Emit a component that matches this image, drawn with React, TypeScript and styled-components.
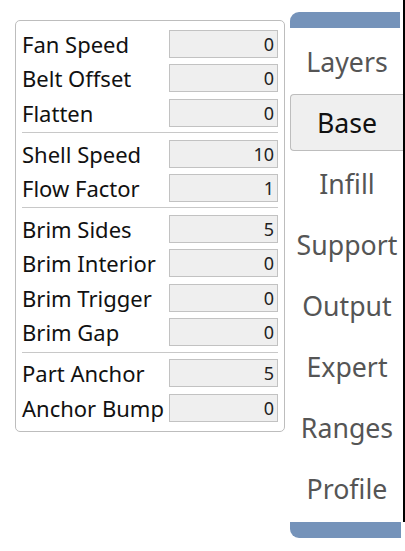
import styled, { createGlobalStyle } from 'styled-components'

const GlobalStyle = createGlobalStyle`
    html, body {
        margin: 0;
        padding: 0;
        background: #fff;
        font-family: 'Noto Sans', 'Open Sans', sans-serif;
        overflow: hidden;
    }
`

const Page = styled.div`
    display: flex;
    align-items: flex-start;
    width: 405px;
    height: 551px;
`

const Panel = styled.div`
    margin: 20px 0 0 15px;
    width: 270px;
    box-sizing: border-box;
    border: 1px solid #bdbdbd;
    border-radius: 5px;
    padding: 5.5px 6px 6px 6px;
    display: flex;
    flex-direction: column;
`

const Row = styled.div`
    height: 34.5px;
    display: flex;
    align-items: center;
    justify-content: space-between;
`

const Label = styled.span`
    font-size: 22px;
    color: #111;
    white-space: nowrap;
`

const Value = styled.input`
    width: 109px;
    height: 28px;
    box-sizing: border-box;
    border: 1px solid #c2c2c2;
    background: #efefef;
    padding: 0 3px 0 0;
    text-align: right;
    font-family: 'Noto Sans', sans-serif;
    font-size: 18px;
    color: #222;
    outline: none;
`

const Separator = styled.div`
    height: 1px;
    background: #c8c8c8;
    margin: 2px 0 3.3px 0;
`

const Menu = styled.div`
    margin-left: 5px;
    width: 115px;
    display: flex;
    flex-direction: column;
`

const MenuList = styled.div`
    display: flex;
    flex-direction: column;
    gap: 4px;
    padding-top: 12px;
    height: 522px;
    box-sizing: border-box;
    border-right: 2px solid #000;
`

const Bar = styled.div<{ $bottom?: boolean }>`
    width: ${({ $bottom }) => ($bottom ? '111px' : '110px')};
    height: 16px;
    flex-shrink: 0;
    background: #7593ba;
    border-radius: ${({ $bottom }) => ($bottom ? '0 0 0 9px' : '9px 0 0 0')};
    margin-bottom: ${({ $bottom }) => ($bottom ? '0' : '1px')};
`

const Item = styled.div<{ $active?: boolean }>`
    height: 57px;
    flex-shrink: 0;
    box-sizing: border-box;
    display: flex;
    align-items: center;
    justify-content: center;
    font-size: 26.7px;
    color: ${({ $active }) => ($active ? '#111' : '#555')};
    background: ${({ $active }) => ($active ? '#efefef' : 'transparent')};
    border: 1px solid ${({ $active }) => ($active ? '#bdbdbd' : 'transparent')};
    border-right: none;
    border-radius: 4px 0 0 4px;
`

const groups = [
    [
        ['Fan Speed', '0'],
        ['Belt Offset', '0'],
        ['Flatten', '0'],
    ],
    [
        ['Shell Speed', '10'],
        ['Flow Factor', '1'],
    ],
    [
        ['Brim Sides', '5'],
        ['Brim Interior', '0'],
        ['Brim Trigger', '0'],
        ['Brim Gap', '0'],
    ],
    [
        ['Part Anchor', '5'],
        ['Anchor Bump', '0'],
    ],
]

const menu = ['Layers', 'Base', 'Infill', 'Support', 'Output', 'Expert', 'Ranges', 'Profile']

export default function App() {
    return (
        <Page>
            <GlobalStyle />
            <Panel>
                {groups.map((group, gi) => (
                    <div key={gi}>
                        {gi > 0 && <Separator />}
                        {group.map(([label, value]) => (
                            <Row key={label}>
                                <Label>{label}</Label>
                                <Value defaultValue={value} />
                            </Row>
                        ))}
                    </div>
                ))}
            </Panel>
            <Menu>
                <MenuList>
                    <Bar />
                    {menu.map((name) => (
                        <Item key={name} $active={name === 'Base'}>
                            {name}
                        </Item>
                    ))}
                </MenuList>
                <Bar $bottom />
            </Menu>
        </Page>
    )
}
